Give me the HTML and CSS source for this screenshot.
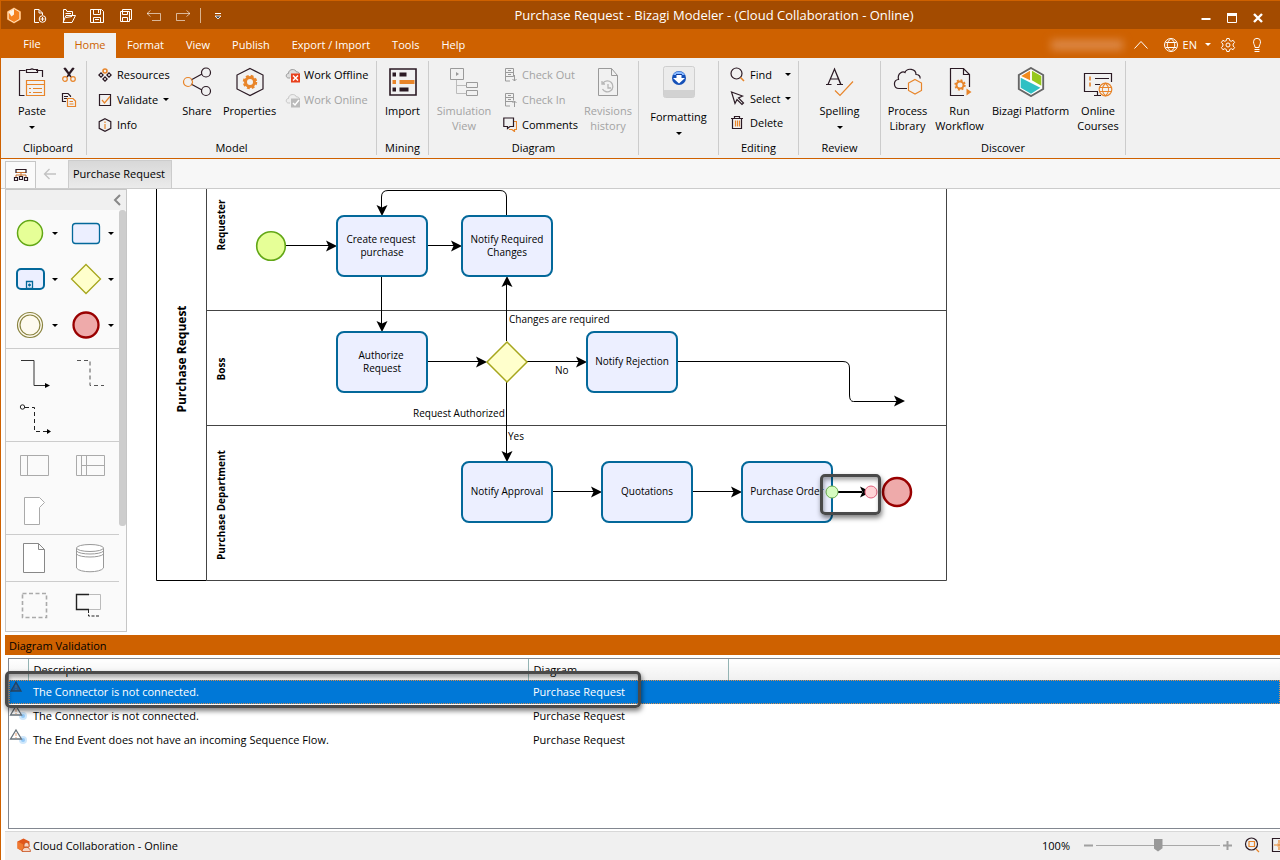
FILE: index.html
```html
<!DOCTYPE html>
<html lang="en">
<head>
<meta charset="utf-8">
<title>Purchase Request - Bizagi Modeler</title>
<link rel="stylesheet" href="styles.css">
</head>
<body>
<div class="app">
  <header class="titlebar">
    <div class="quick">
      <span class="logo"><svg width="16" height="17" viewBox="0 0 16 17"><path d="M8 .5l7 4v8l-7 4-7-4v-8z" fill="#f5a04a"/><path d="M8 1.500l5.800 3.400v7.200L8 15.500l-5.800-3.400V4.900z" fill="#f58220" stroke="#ffe2c2" stroke-width="1"/><path d="M2.500 5L8 2v5.500L5.500 9.500z" fill="#fff3e4"/></svg></span>
      <button aria-label="New"><svg width="14" height="16" viewBox="0 0 14 16"><path d="M6 14.500H1.500V1.500H6L9.500 5v2M6 1.500V5h3.500" class="w"/><circle cx="9.500" cy="11" r="3.300" class="w"/><path d="M9.500 9v4M7.500 11h4" class="w"/></svg></button>
      <button aria-label="Open"><svg width="16" height="16" viewBox="0 0 16 16"><path d="M2.500 14V1.500H5l1 2h5.500V7M4.500 5.500H10M2 14.500L5 7.500h9.500L11 14.500zM5 9.500l6-1" class="w"/></svg></button>
      <button aria-label="Save"><svg width="14" height="14" viewBox="0 0 14 14"><path d="M.5.5h11l2 2v11H.5zM3.500.5v5h7v-5M8.500 1v3M3.500 13V8.500h7V13M5 10.500h4" class="w"/></svg></button>
      <button aria-label="Save all"><svg width="14" height="14" viewBox="0 0 14 14"><path d="M3.500 2V.5h9v10H11M1.500 2.500h9v10h-9zM3.500 2.500v3h5v-3M3.500 12V8.500h5V12" class="w"/></svg></button>
      <button aria-label="Undo"><svg width="16" height="12" viewBox="0 0 16 12"><path d="M4.500.5l-3.500 3 3.500 3M1 3.500h13.500v7H6" class="w dim"/></svg></button>
      <button aria-label="Redo"><svg width="16" height="12" viewBox="0 0 16 12"><path d="M11.500.5l3.500 3-3.500 3M15 3.500H1.500v7H10" class="w dim"/></svg></button>
      <i class="qsep"></i>
      <button class="more" aria-label="Customize toolbar"><svg width="8" height="8" viewBox="0 0 8 8"><path d="M1 1.500h6" stroke="#fff"/><path d="M1 4h6L4 7z" fill="#345" stroke="#fff" stroke-width=".8"/></svg></button>
    </div>
    <h1>Purchase Request - Bizagi Modeler - (Cloud Collaboration - Online)</h1>
    <div class="win">
      <button aria-label="Minimize"><svg width="12" height="12" viewBox="0 0 12 12"><path d="M1.500 7h9" stroke="#fff" stroke-width="2"/></svg></button>
      <button aria-label="Maximize"><svg width="12" height="12" viewBox="0 0 12 12"><path d="M1.500 3v7.500h9V3" class="w"/><path d="M1 2.500h10" stroke="#fff" stroke-width="3"/></svg></button>
      <button aria-label="Close"><svg width="12" height="12" viewBox="0 0 12 12"><path d="M2 2l8 8M10 2l-8 8" stroke="#fff" stroke-width="2.400"/></svg></button>
    </div>
  </header>

  <nav class="tabs">
    <button class="file">File</button>
    <button class="active">Home</button>
    <button>Format</button>
    <button>View</button>
    <button>Publish</button>
    <button>Export / Import</button>
    <button>Tools</button>
    <button>Help</button>
    <div class="account">
      <span class="user"></span>
      <button aria-label="Collapse ribbon"><svg width="16" height="10" viewBox="0 0 16 10"><path d="M1.500 8.500L8 1.500l6.500 7" class="w"/></svg></button>
      <button class="lang" aria-haspopup="true"><svg width="16" height="16" viewBox="0 0 16 16"><circle cx="8" cy="8" r="6.500" class="w"/><path d="M8 1.500c-5 4-5 9 0 13M8 1.500c5 4 5 9 0 13M2.500 5.500h11M2.500 10.500h11" class="w"/></svg>EN<i class="caret white"></i></button>
      <button aria-label="Settings"><svg width="16" height="16" viewBox="0 0 16 16"><path d="M6.800 1.500h2.400l.4 2 1.600.8 1.900-1 1.500 2.200-1.500 1.500v2l1.500 1.500-1.500 2.200-1.900-1-1.600.8-.4 2H6.800l-.4-2-1.600-.8-1.900 1-1.500-2.200L2.900 9V7L1.400 5.500l1.500-2.200 1.900 1 1.600-.8z" class="w"/><circle cx="8" cy="8" r="2" class="w"/></svg></button>
      <button class="bulb" aria-label="Tips"><svg width="10" height="16" viewBox="0 0 10 16"><path d="M3 10.500C3 8 1.500 7.500 1.500 4.800a3.500 3.500 0 0 1 7 0C8.500 7.500 7 8 7 10.500zM2.500 12.500h5M2.500 14.500h5" class="w"/></svg></button>
    </div>
  </nav>

  <section class="ribbon">
    <div class="group clipboard">
      <div class="items">
        <button class="big"><svg width="28" height="30" viewBox="0 0 28 30"><path d="M7.500 3.500H1.500v25h5M18 3.500h6.500V10M8.500 5.500v-3h4a2 1.800 0 0 1 3 0h4v3z" class="k"/><path d="M8.500 13.500h18v15h-18zM8.500 17.500h18M11 21.500h2M15 21.500h9M11 25.500h2M15 25.500h9" class="o"/></svg>Paste<i class="caret"></i></button>
        <div class="pair">
          <button aria-label="Cut"><svg width="16" height="16" viewBox="0 0 16 16"><path d="M3 1l7 9M13 1l-7 9M4 1l5 7M12 1L7 8" class="k thick"/><circle cx="4" cy="12" r="2.300" class="o"/><circle cx="12" cy="12" r="2.300" class="o"/></svg></button>
          <button aria-label="Copy"><svg width="16" height="16" viewBox="0 0 16 16"><path d="M5 9.500H1.500v-8H7l2.500 2.500v1M3 4.500h4M3 6.500h3" class="k"/><path d="M6.500 6.500H12l2.500 2.500v5.500h-8zM8.500 9.500H12M8.500 12h4" class="o"/></svg></button>
        </div>
      </div>
      <h2>Clipboard</h2>
    </div>
    <div class="group model">
      <div class="items">
        <div class="col">
          <button><svg width="14" height="14" viewBox="0 0 14 14"><circle cx="7" cy="3" r="2" class="o thick"/><path d="M3 4l3 3-3 3-3-3zM11 4l3 3-3 3-3-3zM7 8l3 3-3 3-3-3z" fill="#2b1a24"/><circle cx="3" cy="7" r="1" fill="#eee"/><circle cx="11" cy="7" r="1" fill="#eee"/><circle cx="7" cy="11" r="1" fill="#eee"/></svg>Resources</button>
          <button><svg width="14" height="14" viewBox="0 0 14 14"><path d="M1.500 1.500h11v11h-11z" class="k"/><path d="M4 7l2.500 3L12 3.500" class="o"/></svg>Validate<i class="caret"></i></button>
          <button><svg width="14" height="14" viewBox="0 0 14 14"><path d="M7 .7l5.800 3v6.600L7 13.300l-5.800-3V3.700z" class="k"/><path d="M7 3.500v1.500M7 6v5" class="o"/></svg>Info</button>
        </div>
        <button class="big share"><svg width="30" height="30" viewBox="0 0 30 30"><path d="M9 13l11-6M9 17l11 6" class="k"/><circle cx="6" cy="15" r="4.500" class="o"/><circle cx="24" cy="5.500" r="4.500" class="k"/><circle cx="24" cy="24" r="4.500" class="k"/></svg>Share</button>
        <button class="big props"><svg width="30" height="30" viewBox="0 0 30 30"><path d="M15 1.500l13 6.500v14l-13 6.500L2 22V8z" class="k"/><circle cx="15" cy="15" r="4.500" fill="none" stroke="#e8852a" stroke-width="3"/><circle cx="15" cy="15" r="6" fill="none" stroke="#e8852a" stroke-width="2.500" stroke-dasharray="2.700 2.012"/></svg>Properties</button>
        <div class="col online">
          <button><svg width="16" height="16" viewBox="0 0 16 16"><path d="M5 11H3.500C.5 11 .5 6.500 3.500 6.500c0-5 7-5 8-1.500 2-.5 3 1 3 2.500" fill="#ddd" stroke="#999"/><rect x="6" y="6.500" width="9" height="9" fill="#e8401c"/><path d="M8 8.500l5 5M13 8.500l-5 5" stroke="#fff" stroke-width="1.500"/></svg>Work Offline</button>
          <button disabled><svg width="16" height="16" viewBox="0 0 16 16"><path d="M5 11H3.500C.5 11 .5 6.500 3.500 6.500c0-5 7-5 8-1.500 2-.5 3 1 3 2.500" fill="#eee" stroke="#c6c6c6"/><rect x="6" y="6.500" width="9" height="9" fill="#bbb"/><path d="M8 11l2 2 4-5" stroke="#fff" fill="none" stroke-width="1.500"/></svg>Work Online</button>
        </div>
      </div>
      <h2>Model</h2>
    </div>
    <div class="group mining">
      <div class="items"><button class="big"><svg width="28" height="30" viewBox="0 0 28 30"><path d="M1 2h26v26H1z" fill="none" stroke="#2b1a24" stroke-width="1.600"/><path d="M3.500 7.500H7M10.500 7.500h7M3.500 22.500H7M10.500 22.500h9" stroke="#2b1a24" stroke-width="4"/><path d="M3.500 15H7M10.500 15h15" stroke="#e8852a" stroke-width="4"/></svg>Import</button></div>
      <h2>Mining</h2>
    </div>
    <div class="group diagram">
      <div class="items">
        <button class="big sim" disabled><svg width="30" height="30" viewBox="0 0 30 30"><path d="M1.500 1.500h13v11h-13zM17.500 15.500h11v5h-11zM17.500 23.500h11v5h-11z" class="g"/><path d="M7 5l3 2-3 2z" fill="#999"/><path d="M7.500 13v13.500h10M7.500 18.500h10" stroke="#bbb" fill="none"/></svg>Simulation<br>View</button>
        <div class="col checks">
          <button disabled><svg width="14" height="15" viewBox="0 0 14 15"><path d="M7 14H2.500V1.500h8v8M2.500 5.500h8M2.500 9.500h8M5 3.500h3M5 7.500h3" class="g"/><path d="M11.500 8v6M9.500 12l2 2 2-2" class="g"/></svg>Check Out</button>
          <button disabled><svg width="14" height="15" viewBox="0 0 14 15"><path d="M7 14H2.500V1.500h8v7M2.500 5.500h8M2.500 9.500h8M5 3.500h3M5 7.500h3" class="g"/><path d="M11.500 15V9M9.500 11l2-2 2 2" class="g"/></svg>Check In</button>
          <button><svg width="14" height="15" viewBox="0 0 14 15"><path d="M11 4.500h2.500v8h-2v2l-2.500-2H6" class="o"/><path d="M.8 1h9.700v8.500H7l-2.500 2v-2H.8z" class="k"/></svg>Comments</button>
        </div>
        <button class="big rev" disabled><svg width="22" height="30" viewBox="0 0 22 30"><path d="M1.500 1.500h13l6 7v20h-19zM14.500 1.500v7h6" class="g"/><path d="M6 16a5.500 5.500 0 1 1-.5 6M5 14v3h3M11 17v4h3" fill="none" stroke="#b5b5b5" stroke-width="1.300"/></svg>Revisions<br>history</button>
      </div>
      <h2>Diagram</h2>
    </div>
    <div class="group format">
      <div class="items"><button class="big"><svg width="32" height="32" viewBox="0 0 32 32"><rect x=".5" y=".5" width="31" height="31" rx="2" fill="#ececec" stroke="#cfcfcf"/><path d="M1 24h30v7H1z" fill="#d2d2d2"/><circle cx="16" cy="12" r="7" fill="#1450b8"/><path d="M10 9a7 7 0 0 1 12 0z" fill="#86b8ff"/><path d="M13.500 8h5v4h3.500L16 17.500 10 12h3.500z" fill="#fff"/><path d="M13 8.500h6" stroke="#123a9a"/></svg>Formatting<i class="caret"></i></button></div>
    </div>
    <div class="group editing">
      <div class="items">
        <div class="col edit">
          <button><svg width="15" height="15" viewBox="0 0 15 15"><circle cx="6.500" cy="6.500" r="5.500" class="k"/><path d="M10.500 10.500l3.500 3.500" class="o thick"/></svg>Find<i class="caret"></i></button>
          <button><svg width="15" height="15" viewBox="0 0 15 15"><path d="M1.500 1l11 4-4 2 5 5-1.500 1.500-5-5-2 4z" class="k"/></svg>Select<i class="caret"></i></button>
          <button><svg width="15" height="15" viewBox="0 0 15 15"><path d="M1 3.500h12M4.500 3V1.500h5V3M2.500 3.500v10h9v-10" class="k"/><path d="M5.500 5.500v6M7.500 5.500v6M9.500 5.500v6" class="o"/></svg>Delete</button>
        </div>
      </div>
      <h2>Editing</h2>
    </div>
    <div class="group review">
      <div class="items"><button class="big"><svg width="30" height="30" viewBox="0 0 30 30"><path d="M3 17.500L9.500 2 16 17.500M5.500 12h8M1 17.500h5.500M12 17.500h6M9.500 2l6 15" class="k"/><path d="M10 23.500l5 5L28 14.500" class="o"/></svg>Spelling<i class="caret"></i></button></div>
      <h2>Review</h2>
    </div>
    <div class="group discover">
      <div class="items">
        <button class="big lib"><svg width="30" height="30" viewBox="0 0 30 30"><path d="M14 21.500H6c-6 0-6-9-.5-9C4 6 10 4 12 5.500c2-5 11-4 11 2 3 0 4.500 2 4 4" class="k"/><path d="M22 12.500l6.500 3.500v7.500L22 27l-6.500-3.500V16z" class="o"/></svg>Process<br>Library</button>
        <button class="big run"><svg width="24" height="30" viewBox="0 0 24 30"><path d="M16 28.500H2.500v-27h13l6 6V20M15.500 1.500v6h6" class="k"/><circle cx="12" cy="18" r="3.500" fill="none" stroke="#e8852a" stroke-width="2"/><circle cx="12" cy="18" r="4.800" fill="none" stroke="#e8852a" stroke-width="1.800" stroke-dasharray="1.900 1.870"/><path d="M18.500 21.500l5 3.500-5 3.500z" fill="#e8852a"/></svg>Run<br>Workflow</button>
        <button class="big plat"><svg width="30" height="32" viewBox="0 0 30 32"><path d="M15 1l13 7.500v15L15 31 2 23.500v-15z" fill="#fff" stroke="#666" stroke-width="2"/><path d="M14 4v10L4.500 9.500z" fill="#f28c1e"/><path d="M16 4l10 5.500V20l-10-6z" fill="#96c81e"/><path d="M4 11.500L25 22l-10 6.500L4 22z" fill="#2fc0c4"/></svg>Bizagi Platform</button>
        <button class="big online-c"><svg width="30" height="30" viewBox="0 0 30 30"><path d="M15 24.500H1.500v-18h27V15M11 28.500h7M14.500 25v3M12 11.500h14M12 17.500h5" class="k"/><path d="M7 9.500v4M7 15.500v4" class="o thick"/><circle cx="22.500" cy="22.500" r="6.300" class="o"/><path d="M22.500 16c-4 4-4 9 0 13M22.500 16c4 4 4 9 0 13M16.500 20.500h12M16.500 24.500h12" class="o"/></svg>Online<br>Courses</button>
      </div>
      <h2>Discover</h2>
    </div>
  </section>

  <div class="doctabs">
    <button class="tree" aria-label="Diagram tree"><svg width="16" height="14" viewBox="0 0 16 14"><path d="M3 1.500h10v3H3z" class="k"/><path d="M3.500 4.500h9M8 5v3M3 9V7h10v2" stroke="#c8702a" fill="none"/><path d="M1.500 9.500h3v3h-3zM6.500 8.500h3v3h-3zM11.500 9.500h3v3h-3z" class="k"/></svg></button>
    <button class="back" aria-label="Back"><svg width="14" height="12" viewBox="0 0 14 12"><path d="M13 6H1.500M6.500 1L1.500 6l5 5" fill="none" stroke="#c2c2c2" stroke-width="1.300"/></svg></button>
    <button class="doc">Purchase Request</button>
  </div>

  <main class="workspace">
    <aside class="palette">
      <div class="phead"><button aria-label="Collapse palette"><svg width="8" height="12" viewBox="0 0 8 12"><path d="M7 1L2 6l5 5" fill="none" stroke="#888" stroke-width="2"/></svg></button></div>
      <div class="pbody">
        <div class="sections">
          <div class="sec">
            <button aria-label="Start event"><svg viewBox="0 0 56 46"><circle cx="24" cy="23" r="12.500" fill="#e6ff97" stroke="#62a716" stroke-width="1.500"/><path d="M46 22h6l-3 3z"/></svg></button>
            <button aria-label="Task"><svg viewBox="0 0 56 46"><rect x="10.500" y="13.500" width="27" height="20" rx="3" fill="#ecefff" stroke="#03689a" stroke-width="1.300"/><path d="M46 22h6l-3 3z"/></svg></button>
            <button aria-label="Sub-process"><svg viewBox="0 0 56 46"><rect x="11" y="13" width="27" height="20" rx="4" fill="#ecefff" stroke="#03689a" stroke-width="2"/><path d="M20.500 32.500v-7h6v7zM23.500 27.500v3M22 29h3" fill="none" stroke="#03689a" stroke-width="1.300"/><path d="M46 22h6l-3 3z"/></svg></button>
            <button aria-label="Gateway"><svg viewBox="0 0 56 46"><path d="M24 8.500L38.500 23 24 37.500 9.500 23z" fill="#ffffcc" stroke="#a6a61d" stroke-width="1.300"/><path d="M46 22h6l-3 3z"/></svg></button>
            <button aria-label="Intermediate event"><svg viewBox="0 0 56 46"><circle cx="24" cy="23" r="12.500" fill="#fefaef" stroke="#8a8440" stroke-width="1.200"/><circle cx="24" cy="23" r="10" fill="#fefaef" stroke="#8a8440" stroke-width="1.200"/><path d="M46 22h6l-3 3z"/></svg></button>
            <button aria-label="End event"><svg viewBox="0 0 56 46"><circle cx="24" cy="23" r="12.500" fill="#eeaaaa" stroke="#990000" stroke-width="2.300"/><path d="M46 22h6l-3 3z"/></svg></button>
          </div>
          <div class="sec">
            <button aria-label="Sequence flow"><svg viewBox="0 0 56 46"><path d="M15 11.500h13v25h13" fill="none" stroke="#333"/><path d="M39 34l5 2.500-5 2.500z"/></svg></button>
            <button aria-label="Association"><svg viewBox="0 0 56 46"><path d="M15 11.500h13v25h14" fill="none" stroke="#555" stroke-dasharray="4 3"/></svg></button>
            <button aria-label="Message flow"><svg viewBox="0 0 56 46"><circle cx="16.500" cy="12" r="2.200" fill="none" stroke="#222"/><path d="M19 12.500h9.500v24H41" fill="none" stroke="#222" stroke-dasharray="4 3"/><path d="M41 34l4 2.500-4 2.500z"/></svg></button>
          </div>
          <div class="sec">
            <button aria-label="Pool"><svg viewBox="0 0 56 46"><path d="M14.500 13.500h28v20h-28zM21.500 13.500v20" fill="none" stroke="#aaa"/></svg></button>
            <button aria-label="Lane"><svg viewBox="0 0 56 46"><path d="M14.500 13.500h28v20h-28zM19.500 13.500v20M24.500 13.500v20M20 23.500h22" fill="none" stroke="#aaa"/></svg></button>
            <button aria-label="Milestone"><svg viewBox="0 0 56 46"><path d="M18.500 9.500h15l5 5-5 5v17h-15z" fill="#fff" stroke="#aaa"/></svg></button>
          </div>
          <div class="sec">
            <button aria-label="Data object"><svg viewBox="0 0 56 46"><path d="M17.500 8.500h15l6 6v23h-21zM32.500 8.500v6h6" fill="#fff" stroke="#888"/></svg></button>
            <button aria-label="Data store"><svg viewBox="0 0 56 46"><path d="M14.500 13v20c3 5 24 5 27 0V13" fill="#fff" stroke="#999"/><ellipse cx="28" cy="13" rx="13.500" ry="3.500" fill="#fff" stroke="#999"/><path d="M14.500 16c3 4 24 4 27 0M14.500 19c3 4 24 4 27 0" fill="none" stroke="#999"/></svg></button>
          </div>
          <div class="sec">
            <button aria-label="Group"><svg viewBox="0 0 56 46"><path d="M16.500 11.500h24v24h-24z" fill="none" stroke="#aaa" stroke-width="1.600" stroke-dasharray="4 2.500"/></svg></button>
            <button aria-label="Annotation"><svg viewBox="0 0 56 46"><path d="M26 12.500h12.500v15H26" fill="none" stroke="#bbb"/><path d="M27 12.500H14.500v15H27" fill="none" stroke="#222" stroke-width="1.400"/><path d="M26.500 28v6H37" fill="none" stroke="#222" stroke-dasharray="3 1.500"/></svg></button>
          </div>
        </div>
        <i class="thumb"></i>
      </div>
    </aside>
    <div class="canvas">
      <svg class="flow" width="1153" height="442" viewBox="127 189 1153 442">
        <defs><path id="head" d="M0 0l-11-5.500 2.500 5.500-2.500 5.500z"/></defs>
        <path d="M156.500 185v395.500h50" fill="none" stroke="#000"/>
        <path d="M206.500 185v395.500h740V185M206.500 310.500h740M206.500 425.500h740" fill="none" stroke="#444"/>
        <g fill="none" stroke="#000">
          <path d="M286 245.500h46M428 245.500h30M381.500 277v50M428 361.500h55M527 361.500h56M506.500 341v-60M506.500 382v74M506.500 216v-19q0-6.500-6.500-6.500H388q-6.500 0-6.500 6.500v14M678 361.500h165q6.500 0 6.500 6.500v27q0 6.500 4 6.500h45M553 491.500h45M693 491.500h45"/>
        </g>
        <use href="#head" x="337" y="246"/><use href="#head" x="462" y="246"/>
        <use href="#head" x="487" y="362"/><use href="#head" x="587" y="362"/>
        <use href="#head" x="905" y="401"/><use href="#head" x="602" y="492"/><use href="#head" x="742" y="492"/>
        <use href="#head" transform="translate(382 216) rotate(90)"/>
        <use href="#head" transform="translate(382 332) rotate(90)"/>
        <use href="#head" transform="translate(507 276) rotate(-90)"/>
        <use href="#head" transform="translate(507 462) rotate(90)"/>
        <circle cx="271" cy="246" r="14.300" fill="#e6ff97" stroke="#62a716" stroke-width="1.600"/>
        <path d="M507 342l20 20-20 20-20-20z" fill="#ffffcc" stroke="#a6a61d" stroke-width="1.500"/>
        <circle cx="897" cy="492" r="14" fill="#eeaaaa" stroke="#990000" stroke-width="2.500"/>
        <g fill="#ecefff" stroke="#03689a" stroke-width="2">
          <rect x="337" y="216" width="90" height="60" rx="7"/><rect x="462" y="216" width="90" height="60" rx="7"/>
          <rect x="337" y="332" width="90" height="60" rx="7"/><rect x="587" y="332" width="90" height="60" rx="7"/>
          <rect x="462" y="462" width="90" height="60" rx="7"/><rect x="602" y="462" width="90" height="60" rx="7"/>
          <rect x="742" y="462" width="90" height="60" rx="7"/>
        </g>
        <g class="label mid">
          <text x="381" y="243">Create request</text><text x="382" y="256">purchase</text>
          <text x="507" y="243">Notify Required</text><text x="507" y="256">Changes</text>
          <text x="381" y="359">Authorize</text><text x="382" y="372">Request</text>
          <text x="632" y="365">Notify Rejection</text><text x="507" y="495">Notify Approval</text>
          <text x="647" y="495">Quotations</text><text x="787" y="495">Purchase Order</text>
        </g>
        <g class="label">
          <text x="509" y="323">Changes are required</text><text x="555" y="374">No</text>
          <text x="413" y="417">Request Authorized</text><text x="508" y="440">Yes</text>
        </g>
        <g class="lane">
          <text class="pool" transform="translate(186 359) rotate(-90)">Purchase Request</text>
          <text transform="translate(225 225) rotate(-90)">Requester</text>
          <text transform="translate(225 369) rotate(-90)">Boss</text>
          <text transform="translate(225 505) rotate(-90)">Purchase Department</text>
        </g>
        <path d="M838 492h24" stroke="#000" stroke-width="2"/>
        <use href="#head" x="871" y="492"/>
        <circle cx="832" cy="492" r="6" fill="#d6fcc0" stroke="#6cae50"/>
        <circle cx="871" cy="492" r="6" fill="#ffd3d6" stroke="#e0607c"/>
      </svg>
      <i class="mark mark-flow"></i>
    </div>
  </main>

  <section class="validation">
    <h2>Diagram Validation</h2>
    <div class="list">
      <table>
        <colgroup><col class="c-icon"><col class="c-desc"><col class="c-diag"><col></colgroup>
        <thead><tr><th></th><th>Description</th><th>Diagram</th><th></th></tr></thead>
        <tbody>
          <tr class="selected"><td><svg width="18" height="18" viewBox="0 0 18 18"><path d="M7 2l5 9H2z" fill="#17589c" stroke="#27435f" stroke-width="1.300"/><path d="M7 5v3M7 9v1" stroke="#5d6870"/></svg></td><td>The Connector is not connected.</td><td>Purchase Request</td><td></td></tr>
          <tr><td><svg width="18" height="18" viewBox="0 0 18 18"><circle cx="14" cy="12" r="4" fill="#cfe7fb"/><circle cx="14" cy="12" r="2" fill="#93c9f7"/><path d="M7 2l5.500 9h-11z" fill="#fff" stroke="#6a737b" stroke-width="1.300"/><path d="M7 5v3M7 9v1" stroke="#e8a070"/></svg></td><td>The Connector is not connected.</td><td>Purchase Request</td><td></td></tr>
          <tr><td><svg width="18" height="18" viewBox="0 0 18 18"><circle cx="14" cy="12" r="4" fill="#cfe7fb"/><circle cx="14" cy="12" r="2" fill="#93c9f7"/><path d="M7 2l5.500 9h-11z" fill="#fff" stroke="#6a737b" stroke-width="1.300"/><path d="M7 5v3M7 9v1" stroke="#e8a070"/></svg></td><td>The End Event does not have an incoming Sequence Flow.</td><td>Purchase Request</td><td></td></tr>
        </tbody>
      </table>
    </div>
    <i class="mark mark-row"></i>
  </section>

  <footer class="status">
    <svg width="14" height="15" viewBox="0 0 14 15"><path d="M6.500.5l6 3v5L6 13.500l-5.500-3v-7z" fill="#e0561a"/><path d="M.5 3.500l6 3v7l-6-3z" fill="#f07a30"/><path d="M5 13.500a4 4 0 0 1 8.500 0zM7 7a2.500 2.500 0 0 1 5 0v2H7z" fill="#f6d5c4" stroke="#c8501c" stroke-width=".8"/></svg>
    <span class="conn">Cloud Collaboration - Online</span>
    <label for="zoom">100%</label>
    <button class="minus" aria-label="Zoom out"><svg width="9" height="9" viewBox="0 0 9 9"><path d="M0 4.500h9" stroke="#a0a0a0" stroke-width="2"/></svg></button>
    <input id="zoom" type="range" min="0" max="200" value="100">
    <button class="plus" aria-label="Zoom in"><svg width="9" height="9" viewBox="0 0 9 9"><path d="M0 4.500h9M4.500 0v9" stroke="#a0a0a0" stroke-width="2"/></svg></button>
    <button class="fit" aria-label="Fit"><svg width="16" height="16" viewBox="0 0 16 16"><circle cx="7.500" cy="7" r="6" class="k"/><path d="M5 4.500h5.500v5H5zM12 12l3 3" class="o"/></svg></button>
    <button class="actual" aria-label="Full page"><svg width="16" height="16" viewBox="0 0 16 16"><path d="M1.500 1.500h13v13h-13z" class="k"/><path d="M8 3v3M8 10v3M3 8h3M10 8h3M7 7h2v2H7z" class="o"/></svg></button>
  </footer>
</div>
</body>
</html>
```

FILE: styles.css
```css
* { box-sizing: border-box; }
body { margin: 0; font: 11px/15px "Open Sans", "Noto Sans", sans-serif; color: #000; background: #fff; }
button { font: inherit; color: inherit; background: none; border: 0; padding: 0; margin: 0; display: flex; align-items: center; justify-content: center; }
h1, h2 { margin: 0; font-size: inherit; font-weight: normal; }
svg { display: block; flex: none; }
i { display: block; }

.w { fill: none; stroke: #fff; }
.dim { opacity: .6; }
.k { fill: none; stroke: #2b1a24; stroke-width: 1.2; }
.o { fill: none; stroke: #e8852a; stroke-width: 1.2; }
.g { fill: none; stroke: #9a9a9a; }
.thick { stroke-width: 1.6; }

.app { display: flex; flex-direction: column; height: 100vh; border-left: 1px solid #ce6100; border-top: 1px solid #ce6100; overflow: hidden; }

.titlebar { display: flex; flex: none; height: 28px; background: #a34b00; color: #fff; }
.quick { display: flex; align-items: center; width: 227px; padding-top: 1px; }
.quick button { width: 29px; height: 28px; }
.quick .logo { width: 25px; padding-left: 5px; }
.qsep { width: 1px; height: 15px; background: #d9b38f; margin: 0 7px 0 3px; }
.quick .more { width: 20px; }
.titlebar h1 { flex: 1; text-align: center; font-size: 13px; line-height: 29px; }
.win { display: flex; align-items: center; justify-content: flex-end; width: 80px; padding: 6px 9px 0 0; }
.win button { flex: none; width: 26px; height: 22px; }

.tabs { display: flex; flex: none; height: 29px; padding-top: 4px; background: #ce6100; color: #fff; }
.tabs > button { padding: 0 11px 2px; }
.tabs > .file { width: 62px; padding-bottom: 4px; margin-right: 1px; }
.tabs > .active { width: 52px; background: #f1f1f1; color: #ce6100; }
.account { display: flex; align-items: center; gap: 14px; margin-left: auto; padding-right: 18px; height: 23px; }
.user { width: 72px; height: 10px; margin-right: -4px; background: #dd8a4a; filter: blur(4px); }
.lang { gap: 4px; margin-right: -5px; }
.lang .caret { margin-left: 4px; }
.bulb { margin-left: 2px; }
.caret { width: 0; border: 3px solid transparent; border-top-color: #000; border-bottom: 0; }
.caret.white { border-top-color: #fff; }

.ribbon { display: flex; flex: none; height: 101px; background: #f1f1f1; border-bottom: 1px solid #ce6100; }
.group { display: flex; flex-direction: column; flex: none; margin: 3px 0; border-right: 1px solid #ccc; }
.group h2 { text-align: center; }
.items { display: flex; align-items: flex-start; flex: 1; justify-content: center; }
.big { flex-direction: column; text-align: center; white-space: nowrap; justify-content: flex-start; padding-top: 6px; }
.big svg { height: 30px; margin-bottom: 6px; }
.big .caret { margin-top: 8px; }
.col { display: flex; flex-direction: column; padding-top: 1px; }
.col button { height: 25px; justify-content: flex-start; gap: 5px; white-space: nowrap; }
button:disabled { color: #a3a3a3; }
.clipboard { width: 86px; padding-left: 9px; }
.clipboard .items { justify-content: flex-start; }
.clipboard .big { width: 44px; }
.pair { display: flex; flex-direction: column; align-items: flex-start; gap: 9px; padding: 6px 0 0 7px; }
.model { width: 290px; }
.model .items, .diagram .items, .editing .items, .discover .items { justify-content: flex-start; }
.model .items { padding-left: 11px; }
.model .col:first-child { width: 79px; }
.share { width: 40px; }
.props { width: 65px; }
.online { padding-left: 3px; }
.online button { gap: 3px; }
.mining { width: 52px; }
.diagram { width: 210px; }
.sim { width: 70px; }
.checks { width: 79px; padding-left: 4px; }
.rev { width: 60px; }
.format { width: 80px; }
.format .big { padding-top: 5px; }
.format .big svg { height: 32px; margin-bottom: 11px; }
.editing { width: 80px; }
.edit { width: 72px; padding-left: 11px; }
.edit button { height: 24px; }
.edit .caret { margin-left: auto; }
.review { width: 82px; }
.discover { width: 245px; }
.lib { width: 53px; }
.run { width: 51px; }
.plat { width: 91px; }
.online-c { width: 44px; }

.doctabs { display: flex; flex: none; height: 30px; background: #f7f7f7; border-bottom: 1px solid #ccc; padding-left: 4px; }
.doctabs .tree { width: 31px; margin-top: 2px; border: 1px solid #c6c6c6; border-bottom: 0; background: #fafafa; }
.doctabs .back { width: 27px; margin-right: 5px; }
.doctabs .doc { padding: 0 6px 2px 4px; margin-top: 1px; border: 1px solid #ccc; border-bottom: 0; background: linear-gradient(#d8d8d8, #ebebeb); }

.workspace { display: flex; flex: 1; min-height: 0; }
.palette { display: flex; flex-direction: column; width: 122px; flex: none; margin-left: 4px; border: 1px solid #c6c6c6; background: #fafafa; }
.phead { display: flex; justify-content: flex-end; height: 20px; padding-right: 5px; background: #f0f0f0; flex: none; }
.pbody { display: flex; flex: 1; min-height: 0; overflow: hidden; }
.sections { width: 113px; flex: none; }
.sec { display: grid; grid-template-columns: 56px 56px; border-bottom: 1px solid #ccc; }
.sec:last-child { border-bottom: 0; }
.sec svg { width: 56px; height: 46px; }
.thumb { flex: 1; height: 75%; background: #cdcdcd; border-radius: 3px; }
.canvas { position: relative; flex: 1; min-width: 0; overflow: hidden; background: #fff; }
.label { font-size: 10px; }
.mid { text-anchor: middle; }
.lane { font-size: 10px; font-weight: bold; text-anchor: middle; }
.pool { font-size: 12px; }
.mark { position: absolute; border: 3px solid #4a4a4a; border-radius: 5px; box-shadow: 1px 3px 5px rgba(0, 0, 0, .5), inset 1px 3px 4px rgba(0, 0, 0, .35); }
.mark-flow { left: 693px; top: 285px; width: 61px; height: 41px; }
.mark-row { left: 0; top: 36px; width: 636px; height: 37px; }

.validation { position: relative; flex: none; display: flex; flex-direction: column; height: 196px; margin: 3px 0 0 4px; }
.validation h2 { height: 20px; line-height: 22px; padding-left: 4px; background: #ce6100; flex: none; }
.list { flex: 1; margin: 3px 0 2px 3px; border: 1px solid #828790; border-right: 0; overflow: hidden; }
table { width: 100%; border-collapse: collapse; table-layout: fixed; }
.c-icon { width: 19px; }
.c-desc { width: 500px; }
.c-diag { width: 200px; }
th { height: 21px; padding: 0 5px; text-align: left; font-weight: normal; line-height: 20px; background: linear-gradient(#fff, #f0f0f0); border-right: 1px solid #94b4b4; }
th:last-child { border-right: 0; }
td { height: 24px; padding: 0 5px; line-height: 24px; white-space: nowrap; }
td:first-child { padding: 0; vertical-align: top; }
.selected { background: #0078d7; color: #fff; outline: 1px dotted #d89050; outline-offset: -1px; }

.status { display: flex; align-items: center; flex: none; height: 29px; margin-left: 4px; padding: 0 0 2px 12px; background: #f0f0f0; border-top: 1px solid #d8d8d8; overflow: hidden; }
.conn { margin-left: 2px; }
.status label { margin-left: auto; margin-right: 14px; }
#zoom { appearance: none; width: 124px; height: 14px; margin: 0 3px; background: linear-gradient(#a8a8a8, #a8a8a8) center / 100% 1px no-repeat; }
#zoom::-webkit-slider-thumb { appearance: none; width: 9px; height: 13px; background: #999; clip-path: polygon(0 0, 100% 0, 100% 75%, 50% 100%, 0 75%); }
.fit { margin-left: 12px; }
.actual { margin: 0 -7px 0 11px; }
```
